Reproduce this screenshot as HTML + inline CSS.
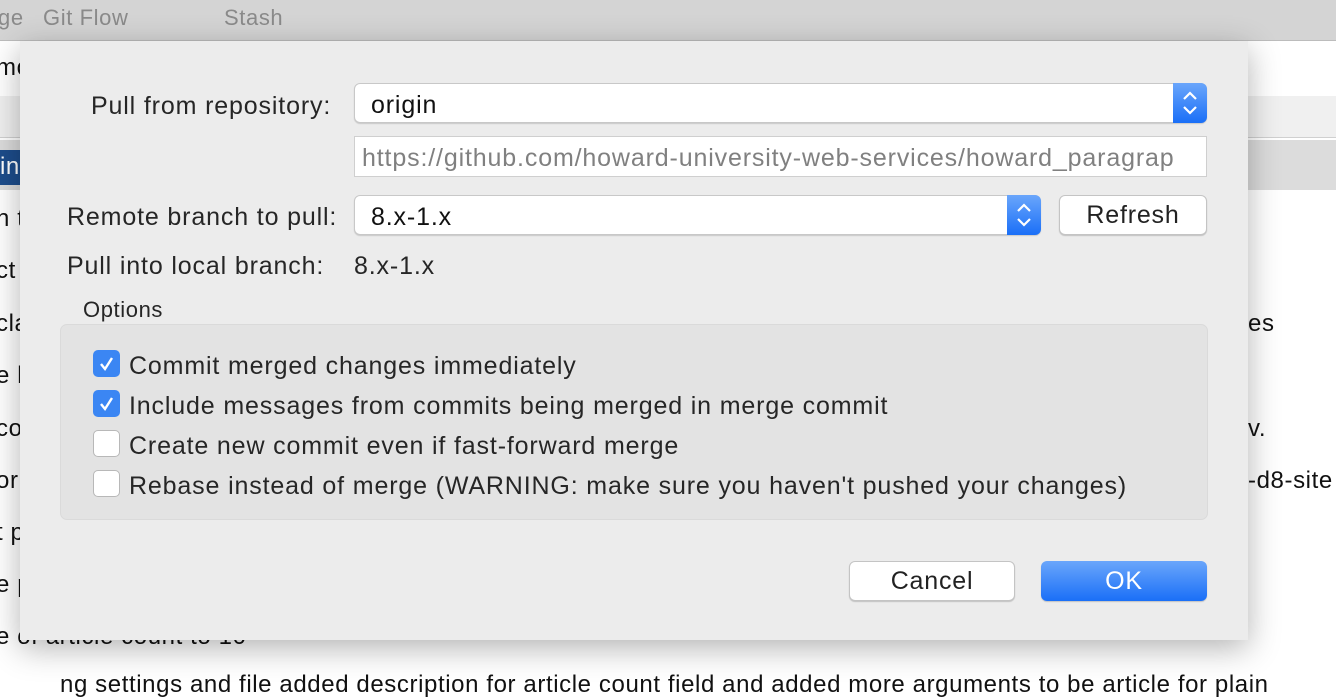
<!DOCTYPE html>
<html><head><meta charset="utf-8"><style>
*{box-sizing:border-box;margin:0;padding:0}
body{width:1336px;height:680px;overflow:hidden;background:#fff;font-family:"Liberation Sans",sans-serif;position:relative;color:#222}
.a{position:absolute;white-space:nowrap}
.bg{font-size:24px;letter-spacing:.6px;color:#111}
.t{font-size:25px;letter-spacing:.85px;color:#262626}
.field{position:absolute;background:#fff;border:1px solid #c8c8c8;border-radius:6px;box-shadow:0 1px 1px rgba(0,0,0,.15)}
.step{position:absolute;top:-1px;right:-1px;bottom:-1px;width:34px;border-radius:0 6px 6px 0;background:linear-gradient(#6aa6fb,#1a6ff7)}
.cb{position:absolute;left:93px;width:27px;height:27px;border-radius:5px}
.on{background:#3b86f3}
.off{background:#fff;border:1px solid #b8b8b8}
.btn{position:absolute;border-radius:6px;background:#fff;border:1px solid #c4c4c4;box-shadow:0 1px 1px rgba(0,0,0,.18);text-align:center;font-size:25px;letter-spacing:.8px}
</style></head><body>
<div class="a" style="left:0;top:0;width:1336px;height:41px;background:#d4d4d4;border-bottom:1px solid #bcbcbc"></div>
<div class="a" style="left:-2px;top:5px;font-size:22px;letter-spacing:.6px;color:#8a8a8a">ge</div>
<div class="a" style="left:43px;top:5px;font-size:22px;letter-spacing:.6px;color:#8a8a8a">Git Flow</div>
<div class="a" style="left:224px;top:5px;font-size:22px;letter-spacing:.6px;color:#8a8a8a">Stash</div>
<div class="a" style="left:0;top:96px;width:1336px;height:42px;background:#f0f0f0;border-bottom:1px solid #d0d0d0"></div>
<div class="a" style="left:0;top:140px;width:1336px;height:50px;background:#dcdcdc"></div>
<div class="a" style="left:0;top:150px;width:22px;height:35px;background:#1d4d8c"></div>
<div class="a bg" style="left:0;top:153px;color:#fff">in</div>
<div class="a bg" style="left:-4px;top:54px">mc</div>
<div class="a bg" style="left:-4px;top:205px">n t</div>
<div class="a bg" style="left:-4px;top:257px">ct</div>
<div class="a bg" style="left:-4px;top:310px">cla</div>
<div class="a bg" style="left:-4px;top:362px">e l</div>
<div class="a bg" style="left:-4px;top:415px">co</div>
<div class="a bg" style="left:-4px;top:467px">or</div>
<div class="a bg" style="left:-4px;top:519px">t p</div>
<div class="a bg" style="left:-4px;top:571px">e p</div>
<div class="a bg" style="left:-4px;top:623px">e of article count to 10</div>
<div class="a bg" style="left:60px;top:671px">ng settings and file added description for article count field and added more arguments to be article for plain</div>
<div class="a bg" style="left:1248px;top:310px">es</div>
<div class="a bg" style="left:1248px;top:415px">v.</div>
<div class="a bg" style="left:1248px;top:467px">-d8-site</div>
<div class="a" style="left:20px;top:41px;width:1228px;height:599px;background:#ececec;box-shadow:0 8px 30px rgba(0,0,0,.3)"></div>
<div class="a t" style="left:91px;top:92px">Pull from repository:</div>
<div class="field" style="left:354px;top:83px;width:853px;height:40px"><div class="a t" style="left:16px;top:7px;color:#111">origin</div><div class="step"><svg width="34" height="40" viewBox="0 0 34 40"><path d="M11 16l6-6 6 6M11 24l6 6 6-6" stroke="#fff" stroke-width="2.2" fill="none"/></svg></div></div>
<div class="a" style="left:354px;top:136px;width:853px;height:41px;background:#fff;border:1px solid #cfcfcf;overflow:hidden"><div class="a t" style="left:7px;top:7px;color:#808080">https://github.com/howard-university-web-services/howard_paragrap</div></div>
<div class="a t" style="left:67px;top:203px">Remote branch to pull:</div>
<div class="field" style="left:354px;top:195px;width:687px;height:40px"><div class="a t" style="left:16px;top:7px;color:#111">8.x-1.x</div><div class="step"><svg width="34" height="40" viewBox="0 0 34 40"><path d="M11 16l6-6 6 6M11 24l6 6 6-6" stroke="#fff" stroke-width="2.2" fill="none"/></svg></div></div>
<div class="btn" style="left:1059px;top:195px;width:148px;height:40px;line-height:38px">Refresh</div>
<div class="a t" style="left:67px;top:252px">Pull into local branch:</div>
<div class="a t" style="left:354px;top:252px">8.x-1.x</div>
<div class="a" style="left:83px;top:297px;font-size:22px;letter-spacing:.6px;color:#262626">Options</div>
<div class="a" style="left:60px;top:324px;width:1148px;height:196px;background:#e3e3e3;border:1px solid #dadada;border-radius:7px"></div>
<div class="cb on" style="top:350px"><svg width="27" height="27"><path d="M8 14l4 5 7-11" stroke="#fff" stroke-width="2.4" fill="none"/></svg></div>
<div class="cb on" style="top:390px"><svg width="27" height="27"><path d="M8 14l4 5 7-11" stroke="#fff" stroke-width="2.4" fill="none"/></svg></div>
<div class="cb off" style="top:430px"></div>
<div class="cb off" style="top:470px"></div>
<div class="a t" style="left:129px;top:352px">Commit merged changes immediately</div>
<div class="a t" style="left:129px;top:392px">Include messages from commits being merged in merge commit</div>
<div class="a t" style="left:129px;top:432px">Create new commit even if fast-forward merge</div>
<div class="a t" style="left:129px;top:472px">Rebase instead of merge (WARNING: make sure you haven't pushed your changes)</div>
<div class="btn" style="left:849px;top:561px;width:166px;height:40px;line-height:38px">Cancel</div>
<div class="btn" style="left:1041px;top:561px;width:166px;height:40px;line-height:40px;border:none;background:linear-gradient(#6aa6fb,#1a6ff7);color:#fff">OK</div>
</body></html>
